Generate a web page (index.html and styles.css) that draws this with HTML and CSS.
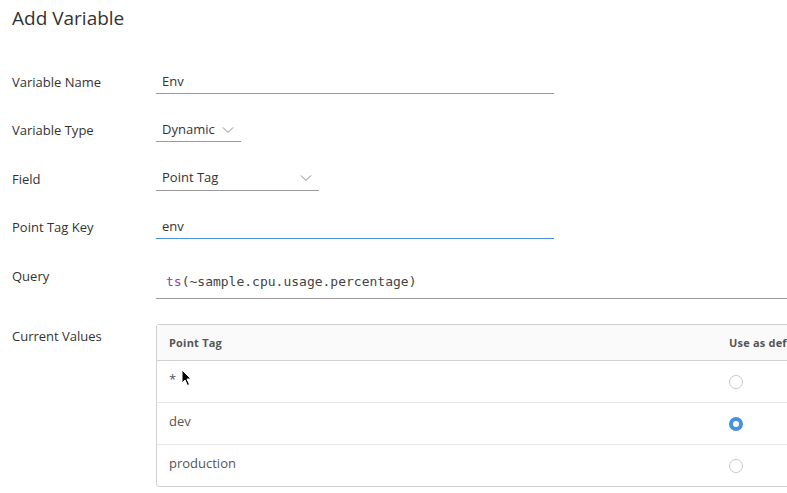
FILE: index.html
```html
<!DOCTYPE html>
<html>
<head>
<meta charset="utf-8">
<link rel="stylesheet" href="styles.css">
</head>
<body>
<div class="page">
  <h1 class="title">Add Variable</h1>
  <div class="form">
    <div class="row">
      <label class="label">Variable Name</label>
      <div class="input wide">Env</div>
    </div>
    <div class="row">
      <label class="label">Variable Type</label>
      <div class="input select type">Dynamic
        <svg class="chev" width="12" height="8" viewBox="0 0 12 8"><path d="M1 1.5 L6 6.5 L11 1.5" fill="none" stroke="#888" stroke-width="1"/></svg>
      </div>
    </div>
    <div class="row">
      <label class="label">Field</label>
      <div class="input select field">Point Tag
        <svg class="chev" width="12" height="8" viewBox="0 0 12 8"><path d="M1 1.5 L6 6.5 L11 1.5" fill="none" stroke="#888" stroke-width="1"/></svg>
      </div>
    </div>
    <div class="row">
      <label class="label">Point Tag Key</label>
      <div class="input wide focused">env</div>
    </div>
    <div class="row query-row">
      <label class="label">Query</label>
      <div class="query"><span class="fn">ts</span>(~sample.cpu.usage.percentage)</div>
    </div>
    <div class="row values-row">
      <label class="label">Current Values</label>
      <div class="table">
        <div class="tr th">
          <div class="c1">Point Tag</div>
          <div class="c2">Use as default</div>
        </div>
        <div class="tr">
          <div class="c1">*</div>
          <div class="c2"><span class="radio"></span></div>
        </div>
        <div class="tr">
          <div class="c1">dev</div>
          <div class="c2"><span class="radio checked"></span></div>
        </div>
        <div class="tr">
          <div class="c1">production</div>
          <div class="c2"><span class="radio"></span></div>
        </div>
      </div>
    </div>
  </div>
  <svg class="cursor" width="12" height="18" viewBox="0 0 12 18"><path d="M1 1 L1 14 L4 11 L6.5 16.5 L8.5 15.5 L6 10 L10 10 Z" fill="#000" stroke="#fff" stroke-width="1"/></svg>
</div>
</body>
</html>
```
FILE: styles.css
```css
html, body {
  margin: 0;
  padding: 0;
  background: #fff;
  overflow: hidden;
}
body {
  width: 787px;
  height: 493px;
  font-family: "Open Sans", "Noto Sans", sans-serif;
  color: #333;
}
.page {
  position: relative;
  padding: 6px 0 0 12px;
}
.title {
  margin: 0;
  font-size: 19px;
  font-weight: 400;
  line-height: 24px;
  color: #333;
}
.form {
  margin-top: 38px;
  display: flex;
  flex-direction: column;
}
.row {
  display: flex;
  align-items: center;
  height: 26px;
  margin-bottom: 22.4px;
}
.label {
  width: 144px;
  flex: none;
  font-size: 13px;
  color: #333;
  padding-top: 2px;
}
.input {
  box-sizing: border-box;
  height: 26px;
  padding: 4px 6px 0;
  font-size: 13px;
  line-height: 18px;
  border-bottom: 1px solid #9a9a9a;
  color: #333;
}
.wide { width: 398px; }
.focused { border-bottom-color: #4a8fd6; }
.select {
  display: flex;
  align-items: center;
  padding-top: 0;
  padding-right: 7px;
}
.select .chev { margin-left: auto; margin-top: 2px; }
.type { width: 85px; }
.field { width: 163px; }
.query-row {
  align-items: flex-start;
  height: 34px;
  margin-top: 3px;
  margin-bottom: 25px;
}
.query-row .label { padding-top: 2px; }
.query {
  box-sizing: border-box;
  width: 700px;
  height: 34px;
  padding: 8px 10px 0;
  font-family: "DejaVu Sans Mono", monospace;
  font-size: 13px;
  line-height: 17px;
  color: #444;
  border-bottom: 1px solid #9a9a9a;
}
.fn { color: #8e44ad; }
.values-row {
  align-items: flex-start;
  height: auto;
}
.values-row .label { padding-top: 3px; }
.table {
  box-sizing: border-box;
  width: 700px;
  border: 1px solid #d0d0d0;
  border-radius: 3px;
  font-size: 13px;
  color: #555;
}
.tr {
  display: flex;
  height: 41px;
  border-top: 1px solid #e6e6e6;
}
.tr:first-child { border-top: none; }
.th {
  height: 35px;
  background: #fafafa;
  border-bottom: 1px solid #d0d0d0;
  font-size: 11px;
  font-weight: 700;
  letter-spacing: 0.2px;
  color: #555;
  align-items: center;
}
.th + .tr { border-top: none; }
.c1 {
  width: 548px;
  padding-left: 12px;
  flex: none;
}
.c2 {
  padding-left: 12px;
  flex: none;
  white-space: nowrap;
}
.tr:not(.th) .c1 { padding-top: 9px; }
.tr:not(.th) .c2 { padding-top: 14px; }
.radio {
  display: block;
  box-sizing: border-box;
  width: 14px;
  height: 14px;
  border-radius: 50%;
  border: 1px solid #c8c8c8;
  background: #fff;
}
.radio.checked {
  border: 4.5px solid #4a90e2;
  background: #fff;
}
.cursor {
  position: absolute;
  left: 181px;
  top: 369px;
}
```
